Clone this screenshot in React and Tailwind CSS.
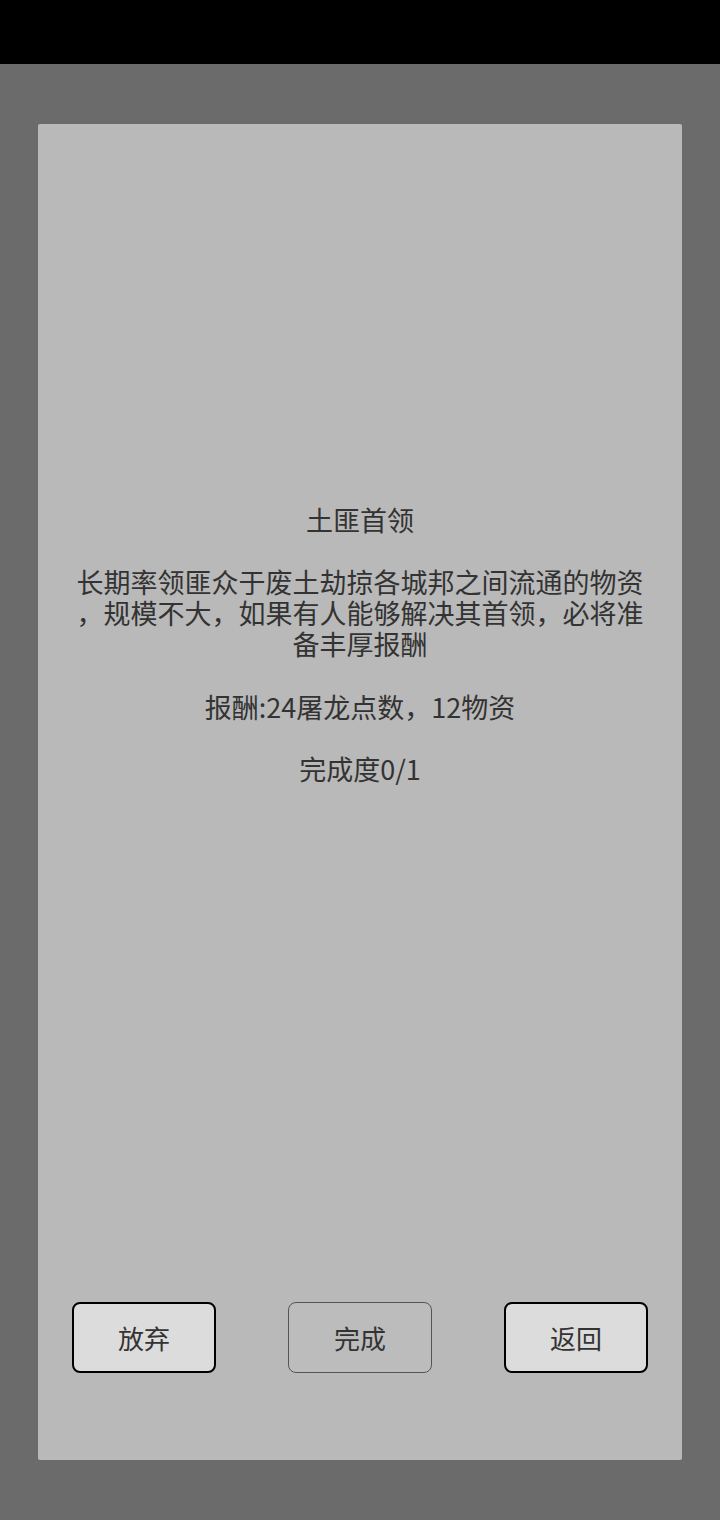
export default function App() {
  const font = { fontFamily: '"Noto Sans CJK SC", "Noto Sans", sans-serif' };
  const lines = [
    "土匪首领",
    "\u00a0",
    "长期率领匪众于废土劫掠各城邦之间流通的物资",
    "，规模不大，如果有人能够解决其首领，必将准",
    "备丰厚报酬",
    "\u00a0",
    "报酬:24屠龙点数，12物资",
    "\u00a0",
    "完成度0/1",
  ];
  return (
    <div className="w-[720px] h-[1520px] bg-[#6b6b6b] flex flex-col" style={font}>
      <div className="h-[64px] bg-black shrink-0" />
      <div className="pt-[60px] px-[38px]">
        <div className="h-[1336px] bg-[#b9b9b9] rounded-[2px] flex flex-col">
          <div className="mt-[380px] flex flex-col items-center text-[#333333] text-[27px] leading-[31.1px] whitespace-nowrap">
            {lines.map((l, i) => (
              <div key={i}>{l}</div>
            ))}
          </div>
          <div className="mt-[518px] flex justify-between px-[34px]">
            <button className="w-[144px] h-[71px] bg-[#dcdcdc] border-2 border-black rounded-[8px] text-[26px] text-[#333333] flex items-center justify-center">放弃</button>
            <button className="w-[144px] h-[71px] bg-[#bcbcbc] border border-[#555] rounded-[8px] text-[26px] text-[#333333] flex items-center justify-center">完成</button>
            <button className="w-[144px] h-[71px] bg-[#dcdcdc] border-2 border-black rounded-[8px] text-[26px] text-[#333333] flex items-center justify-center">返回</button>
          </div>
        </div>
      </div>
    </div>
  );
}
